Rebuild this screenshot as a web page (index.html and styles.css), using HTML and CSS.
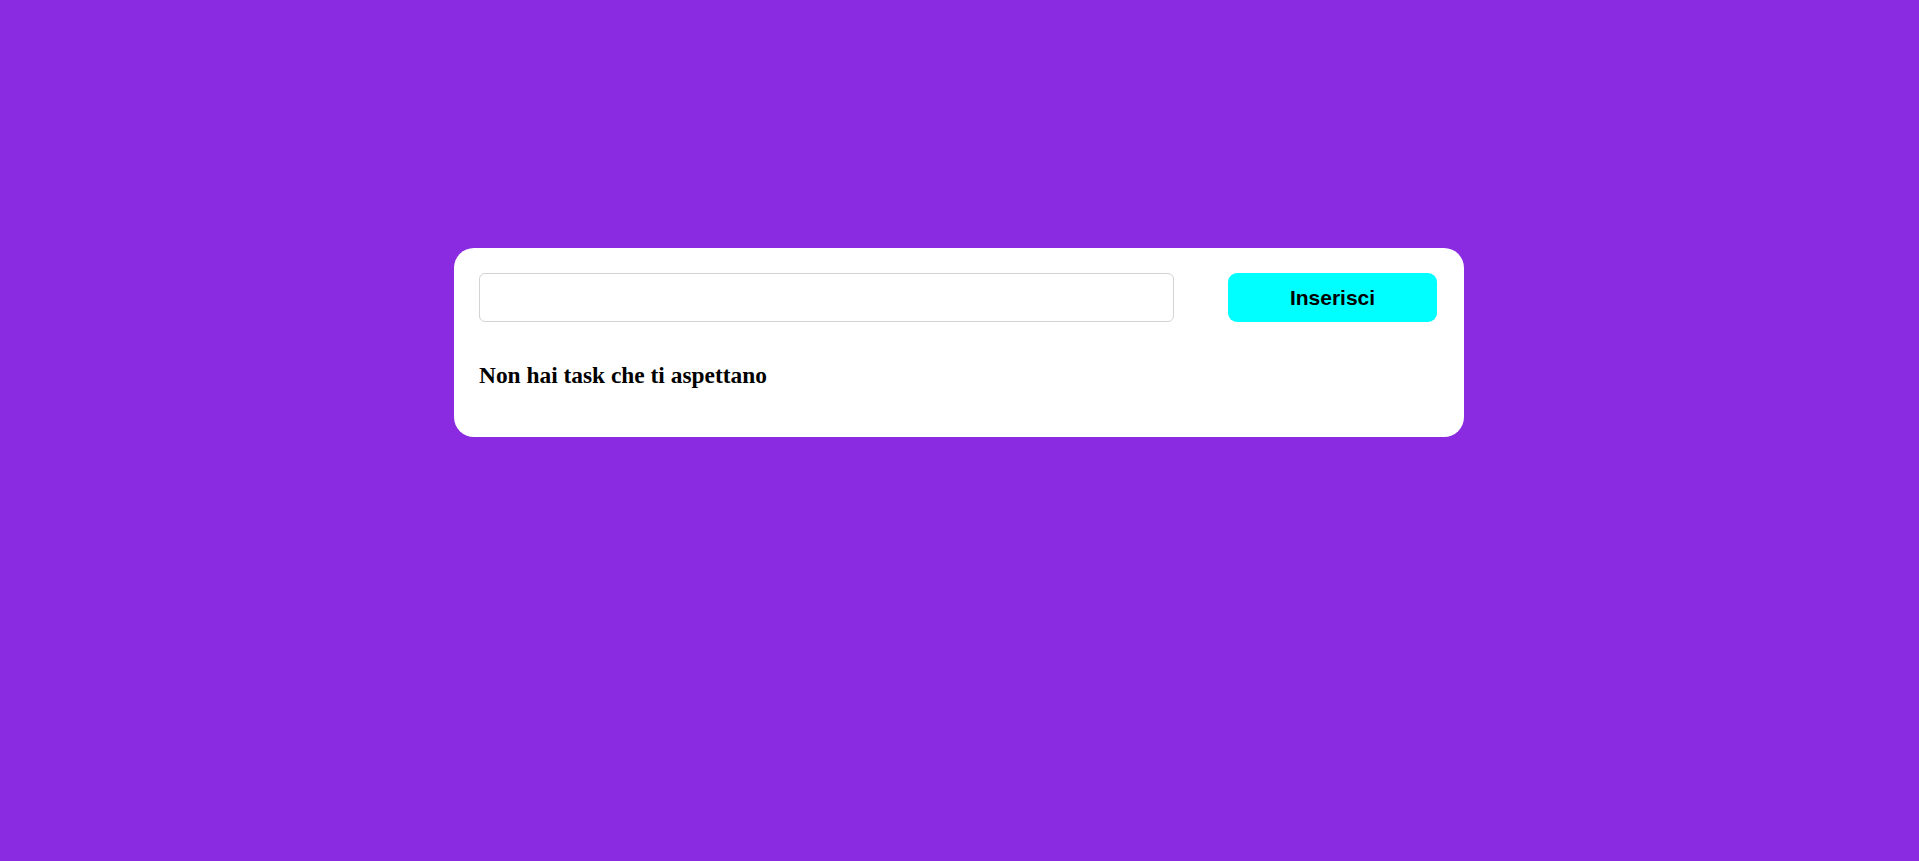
FILE: index.html
```html
<!DOCTYPE html>
<html lang="it">
<head>
<meta charset="utf-8">
<title>Todo</title>
<link rel="stylesheet" href="styles.css">
</head>
<body>
<div class="card">
  <div class="row">
    <input class="task-input" type="text">
    <button class="add-btn">Inserisci</button>
  </div>
  <p class="empty">Non hai task che ti aspettano</p>
</div>
</body>
</html>
```
FILE: styles.css
```css
html, body {
  margin: 0;
  padding: 0;
  height: 100%;
}
body {
  background: #8a2be2;
  font-family: "Liberation Serif", "Times New Roman", serif;
  padding: 248px 1px 0 0;
  box-sizing: border-box;
}
.card {
  width: 960px;
  margin: 0 auto;
  padding: 25px;
  background: #ffffff;
  border-radius: 20px;
  height: 139px;
}
.row {
  display: flex;
  align-items: stretch;
  gap: 54px;
  height: 49px;
}
.task-input {
  width: 695px;
  height: 49px;
  box-sizing: border-box;
  border: 1px solid #d3d3d3;
  border-radius: 6px;
  margin: 0;
  padding: 0 10px;
  font-size: 18px;
  outline: none;
}
.add-btn {
  width: 209px;
  height: 49px;
  box-sizing: border-box;
  margin: 0;
  border: none;
  border-radius: 9px;
  background: #00ffff;
  color: #000;
  font-family: "Liberation Sans", Arial, sans-serif;
  font-weight: bold;
  font-size: 21px;
  cursor: pointer;
}
.empty {
  margin: 40px 0 0 0;
  font-size: 23.4px;
  font-weight: bold;
  color: #000;
}
```
